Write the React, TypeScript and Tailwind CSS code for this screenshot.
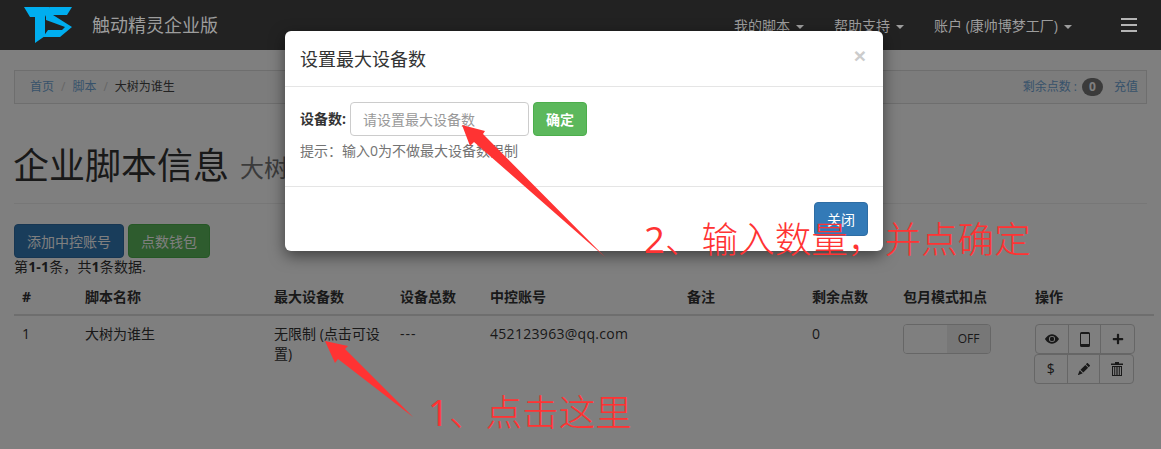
import React from "react";
import { BsEyeFill, BsPencilFill } from "react-icons/bs";
import { FaPlus } from "react-icons/fa";

const font = "font-['Open_Sans','Noto_Sans_CJK_SC',sans-serif]";

function Caret() {
  return <span className="ml-[6px] inline-block align-middle border-x-4 border-t-4 border-x-transparent border-t-[#9d9d9d]" />;
}

function Nav() {
  return (
    <header className="relative z-50 h-[50px] bg-[#222] text-[#9d9d9d] text-[14px] flex items-center">
      <svg width="50" height="38" viewBox="24 6 50 38" className="ml-[24px] shrink-0">
        <polygon fill="#00aeef" points="24,7 50,7 45,17 45,36 35,43 35,17 30,17" />
        <polygon fill="#00aeef" points="50,7 72,7 67,15 53,15 72,27 60,37 43,37 48,30 62,30 65,27 46,20 46,12" />
      </svg>
      <span className="ml-[18px] text-[18px]">触动精灵企业版</span>
      <nav className="ml-auto flex items-center">
        <span className="w-[100px]">我的脚本<Caret /></span>
        <span className="w-[100px]">帮助支持<Caret /></span>
        <span className="w-[187px]">账户 (康帅博梦工厂)<Caret /></span>
      </nav>
      <div className="mr-[24px] w-[16px] flex flex-col gap-[4px]">
        <i className="block h-[2px] bg-[#b5b5b5]" />
        <i className="block h-[2px] bg-[#b5b5b5]" />
        <i className="block h-[2px] bg-[#b5b5b5]" />
      </div>
    </header>
  );
}

function Breadcrumb() {
  return (
    <div className="mt-[20px] mx-[14px] h-[34px] border border-[#ddd] bg-[#f9f9f9] flex items-center px-[15px] text-[12px]">
      <a className="text-[#6fa5d6]">首页</a>
      <span className="mx-[7px] text-[#ccc]">/</span>
      <a className="text-[#6fa5d6]">脚本</a>
      <span className="mx-[7px] text-[#ccc]">/</span>
      <span className="text-[#444]">大树为谁生</span>
      <span className="ml-auto text-[#6fa5d6]">剩余点数 :</span>
      <span className="ml-[5px] w-[21px] h-[18px] rounded-full bg-[#777] text-white text-[12px] font-bold flex items-center justify-center">0</span>
      <a className="ml-[11px] text-[#6fa5d6] mr-[-7px]">充值</a>
    </div>
  );
}

const heads = ["#", "脚本名称", "最大设备数", "设备总数", "中控账号", "备注", "剩余点数", "包月模式扣点", "操作"];
const widths = ["w-[63px]", "w-[189px]", "w-[126px]", "w-[90px]", "w-[197px]", "w-[125px]", "w-[91px]", "w-[132px]", "w-[127px]"];

function Btn({ children }: { children: React.ReactNode }) {
  return <span className="w-[33px] h-full flex items-center justify-center border-r border-[#ccc] last:border-r-0 text-[#333] text-[14px]">{children}</span>;
}

function PhoneIcon() {
  return (
    <svg width="10" height="15" viewBox="0 0 10 15">
      <path fillRule="evenodd" fill="#333" d="M1.5 0h7A1.5 1.5 0 0 1 10 1.5v12A1.5 1.5 0 0 1 8.5 15h-7A1.5 1.5 0 0 1 0 13.5v-12A1.5 1.5 0 0 1 1.5 0zM1 2v10h8V2z" />
    </svg>
  );
}

function TrashIcon() {
  return (
    <svg width="12" height="14" viewBox="0 0 12 14" fill="#333">
      <path d="M4 0h4v1.5h4V3H0V1.5h4z" />
      <path fillRule="evenodd" d="M1 4h10v10H1zM2 5v8h1.2V5zm2.2 0v8h1.2V5zm2.4 0v8h1.2V5zm2.2 0v8H10V5z" />
    </svg>
  );
}

function Table() {
  return (
    <table className="ml-[14px] w-[1140px] table-fixed border-collapse text-[14px] text-[#333]">
      <thead>
        <tr className="h-[37px] border-b-2 border-[#ddd]">
          {heads.map((h, i) => (
            <th key={h} className={`${widths[i]} px-[8px] text-left font-bold`}>{h}</th>
          ))}
        </tr>
      </thead>
      <tbody>
        <tr className="align-top leading-[20px]">
          <td className="px-[8px] pt-[8px]">1</td>
          <td className="px-[8px] pt-[8px]">大树为谁生</td>
          <td className="px-[8px] pt-[8px]">无限制 (点击可设置)</td>
          <td className="px-[8px] pt-[8px] tracking-[1px]">---</td>
          <td className="px-[8px] pt-[8px] tracking-[0.3px]">452123963@qq.com</td>
          <td className="px-[8px] pt-[8px]" />
          <td className="px-[8px] pt-[8px]">0</td>
          <td className="p-[8px]">
            <div className="w-[88px] h-[30px] rounded-[4px] border border-[#ccc] flex overflow-hidden text-[12px]">
              <span className="w-[43px] bg-white" />
              <span className="flex-1 bg-[#eee] flex items-center justify-center text-[#333]">OFF</span>
            </div>
          </td>
          <td className="p-[8px]">
            <div className="w-[100px] h-[30px] border border-[#ccc] rounded-[4px] flex">
              <Btn><BsEyeFill size={14} /></Btn>
              <Btn><PhoneIcon /></Btn>
              <Btn><FaPlus size={12} /></Btn>
            </div>
            <div className="w-[100px] h-[30px] ml-[-1px] border border-[#ccc] rounded-[4px] flex">
              <Btn>$</Btn>
              <Btn><BsPencilFill size={12} /></Btn>
              <Btn><TrashIcon /></Btn>
            </div>
          </td>
        </tr>
      </tbody>
    </table>
  );
}

function Modal() {
  return (
    <div className="absolute z-50 left-[285px] top-[31px] w-[598px] h-[220px] bg-white rounded-[6px] shadow-[0_5px_15px_rgba(0,0,0,0.5)] text-[14px] text-[#333]">
      <div className="h-[56px] border-b border-[#e5e5e5] flex items-center pl-[15px] pr-[17px] text-[18px]">
        <span className="mt-[2px]">设置最大设备数</span>
        <span className="ml-auto text-[21px] font-bold text-[#ccc] mt-[-6px] font-['Liberation_Sans',sans-serif]">×</span>
      </div>
      <div className="h-[100px] border-b border-[#e5e5e5] pl-[15px] pt-[15px]">
        <div className="flex items-center">
          <b className="w-[50px] mt-[-1px] whitespace-nowrap">设备数:</b>
          <input
            className="w-[179px] h-[34px] border border-[#ccc] rounded-[4px] px-[12px] text-[14px] placeholder:text-[#999] outline-none"
            placeholder="请设置最大设备数"
          />
          <button className="ml-[4px] w-[54px] h-[34px] rounded-[4px] bg-[#5cb85c] border border-[#4cae4c] text-white text-[14px] font-bold">确定</button>
        </div>
        <p className="mt-[5px] text-[#737373] leading-[20px]">提示：输入0为不做最大设备数限制</p>
      </div>
      <div className="flex justify-end pt-[15px] pr-[15px]">
        <button className="w-[54px] h-[34px] rounded-[4px] bg-[#337ab7] border border-[#2e6da4] text-white text-[14px]">关闭</button>
      </div>
    </div>
  );
}

export default function App() {
  return (
    <div className={`relative w-[1161px] h-[449px] overflow-hidden bg-white ${font}`}>
      <Nav />
      <Breadcrumb />
      <div className="mx-[14px] mt-[40px] pb-[15px] border-b border-[#eee] text-[#333] h-[60px] flex items-center">
        <span className="text-[36px] leading-[40px] ml-[-1px]">企业脚本信息</span>
        <span className="ml-[11px] text-[24px] text-[#777] leading-[40px] mt-[3px]">大树为谁生</span>
      </div>
      <div className="mt-[20px] ml-[14px] flex gap-[4px] text-[14px] text-white">
        <span className="w-[110px] h-[34px] rounded-[4px] bg-[#337ab7] border border-[#2e6da4] flex items-center justify-center">添加中控账号</span>
        <span className="w-[82px] h-[34px] rounded-[4px] bg-[#5cb85c] border border-[#4cae4c] flex items-center justify-center">点数钱包</span>
      </div>
      <div className="ml-[14px] h-[20px] leading-[18px] text-[14px] text-[#333] tracking-[0.15px]">第<b>1-1</b>条，共<b>1</b>条数据.</div>
      <Table />
      <div className="absolute inset-0 z-40 bg-black/50" />
      <Modal />
      <svg className="absolute inset-0 z-[60] pointer-events-none" width="1161" height="449">
        <polygon fill="#ff3333" points="325,341 348,346 345,349 413,417 338,359 335,363" />
        <polygon fill="#ff3333" points="462,125 485,131 483,134 605,257 474,142 470,146" />
      </svg>
      <div className="absolute z-[60] left-[428px] top-[385px] text-[36.6px] leading-[54px] font-light text-[#ff3333] whitespace-nowrap"><span className="font-medium">1</span>、点击这里</div>
      <div className="absolute z-[60] left-[644px] top-[212px] text-[36.6px] leading-[54px] font-light text-[#ff3333] whitespace-nowrap"><span className="font-medium">2</span>、输入数量，并点确定</div>
    </div>
  );
}
